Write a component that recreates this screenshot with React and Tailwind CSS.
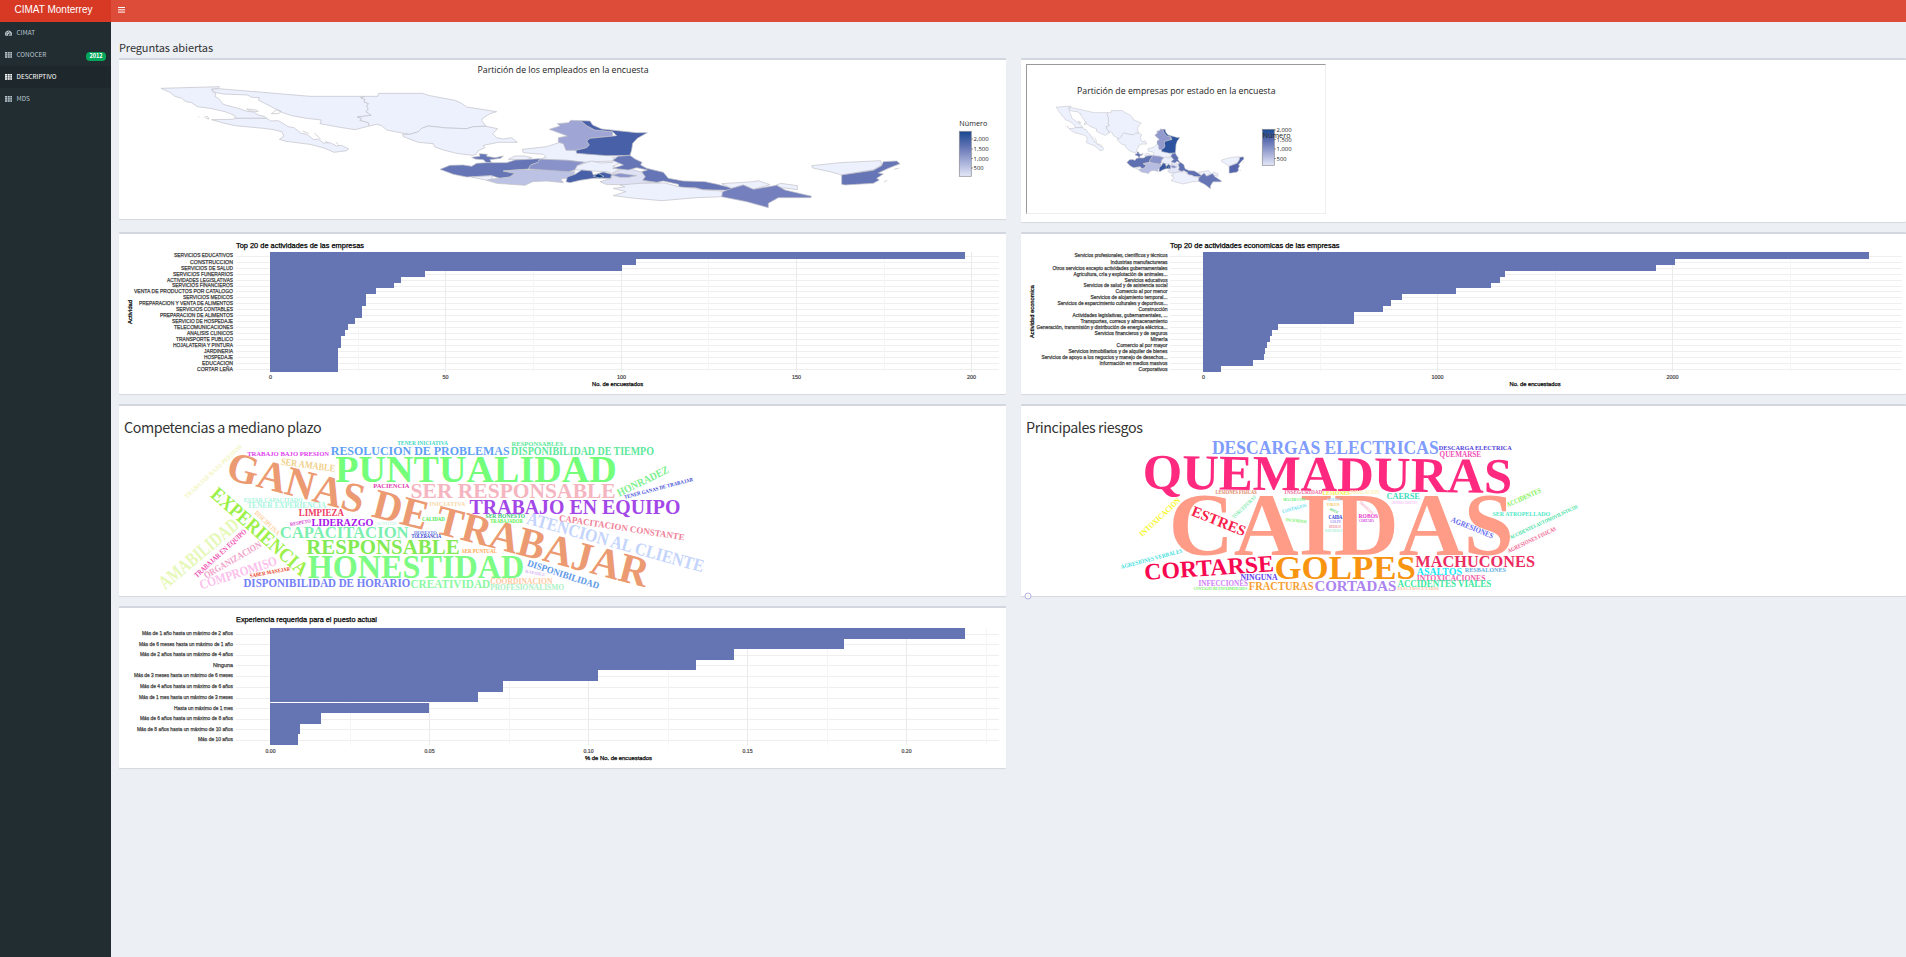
import React from "react";

const CJK = '"Noto Sans CJK SC", "Open Sans", sans-serif';
const SANS = '"Open Sans", "Noto Sans", sans-serif';
const HELV = '"Liberation Sans", Arial, sans-serif';
const SERIF = '"Liberation Serif", serif';

/* ---------- Map of Mexico ---------- */
// [name, outline, fill for employees, fill for companies]
const STATES = [
  ["bc", "M153,100 L328,95 L325,101 L305,103 L308,110 L318,116 L315,124 L326,131 L340,148 L362,154 L385,160 L408,168 L430,171 L446,180 L465,185 L470,190 L375,190 L376,184 L366,178 L345,170 L300,160 L262,155 L245,143 L228,140 L215,130 L195,124 L180,112 Z", "#edf1fe", "#edf1fe"],
  ["bcs", "M375,190 L470,190 L482,198 L505,197 L535,215 L552,218 L572,234 L590,238 L612,254 L625,252 L640,264 L660,263 L680,273 L695,271 L716,282 L710,287 L672,292 L645,280 L600,268 L528,259 L508,253 L522,243 L515,230 L490,224 L460,220 L375,212 L340,204 L305,194 L368,193 Z", "#edf1fe", "#edf1fe"],
  ["son", "M325,101 L460,112 L600,124 L765,124 L752,128 L765,133 L762,141 L776,146 L770,153 L775,162 L768,170 L784,181 L742,186 L755,190 L750,196 L775,203 L778,213 L735,224 L690,217 L630,206 L634,195 L590,190 L545,182 L515,172 L478,152 L445,135 L448,128 L425,127 L412,120 L340,117 L315,112 L305,103 Z", "#edf1fe", "#edf1fe"],
  ["chih", "M765,124 L803,124 L806,115 L937,115 L960,122 L1035,136 L1055,145 L1070,156 L1160,170 L1140,176 L1118,190 L1115,197 L1128,213 L1090,215 L1070,221 L1010,219 L955,213 L935,220 L925,230 L900,238 L870,233 L830,225 L815,212 L800,208 L778,213 L775,203 L750,196 L755,190 L742,186 L784,181 L768,170 L775,162 L770,153 L776,146 L762,141 L765,133 L752,128 Z", "#edf1fe", "#edf1fe"],
  ["dgo", "M955,213 L1010,219 L1070,221 L1090,215 L1128,214 L1163,221 L1148,236 L1160,248 L1180,252 L1205,248 L1222,262 L1165,262 L1120,271 L1125,278 L1105,287 L1098,298 L1088,301 L1040,295 L1000,285 L975,276 L970,266 L925,262 L880,245 L878,238 L900,238 L925,230 L935,220 Z", "#edf1fe", "#edf1fe"],
  ["nay", "M1085,307 L1110,304 L1108,296 L1132,298 L1130,304 L1155,308 L1180,303 L1172,310 L1140,314 L1145,324 L1128,322 L1120,314 L1095,312 Z", "#6575b5", "#5f70b2"],
  ["ags", "M1195,313 L1215,303 L1245,303 L1265,308 L1250,314 Z", "#edf1fe", "#edf1fe"],
  ["jal", "M990,343 L1020,331 L1060,330 L1085,334 L1100,325 L1130,323 L1190,323 L1215,315 L1290,311 L1284,322 L1262,330 L1255,342 L1180,348 L1215,355 L1200,366 L1170,370 L1145,362 L1070,366 L1030,358 Z", "#6575b5", "#5f70b2"],
  ["col", "M1085,366 L1145,362 L1147,372 L1130,376 Z", "#edf1fe", "#edf1fe"],
  ["mich", "M1130,376 L1147,372 L1170,370 L1200,366 L1215,355 L1180,348 L1225,344 L1300,345 L1395,350 L1392,358 L1370,370 L1352,372 L1360,383 L1310,378 L1268,380 L1245,391 L1160,385 Z", "#bcc2e4", "#b7bde2"],
  ["slp", "M1237,283 L1310,275 L1350,262 L1362,266 L1370,285 L1398,285 L1400,294 L1440,298 L1560,302 L1508,308 L1515,318 L1460,320 L1420,322 L1375,316 L1290,313 L1308,306 L1300,298 L1240,293 Z", "#edf1fe", "#edf1fe"],
  ["gto", "M1262,330 L1284,322 L1290,312 L1330,314 L1375,316 L1425,322 L1402,332 L1395,345 L1375,350 L1300,345 L1255,342 Z", "#8993c9", "#8993c9"],
  ["nl", "M1318,223 L1350,213 L1342,206 L1375,203 L1383,196 L1412,197 L1430,212 L1455,225 L1508,230 L1508,243 L1440,250 L1430,258 L1438,270 L1430,278 L1398,286 L1368,286 L1360,266 L1345,262 L1345,248 L1372,243 Z", "#9fa6d5", "#9299cc"],
  ["tam", "M1412,197 L1440,198 L1448,210 L1475,222 L1580,233 L1612,233 L1582,250 L1568,265 L1565,285 L1560,301 L1490,302 L1400,295 L1398,286 L1430,278 L1438,270 L1430,258 L1440,250 L1520,242 L1508,230 L1455,225 L1430,212 Z", "#4860a8", "#2d529d"],
  ["qro", "M1395,345 L1402,332 L1445,318 L1470,324 L1508,322 L1510,314 L1530,325 L1508,334 L1530,342 L1505,355 L1490,350 L1445,348 L1420,345 Z", "#edf1fe", "#edf1fe"],
  ["pue", "M1505,358 L1530,345 L1555,336 L1570,345 L1600,352 L1605,366 L1598,376 L1650,382 L1590,385 L1560,390 L1488,388 L1470,380 L1505,370 Z", "#dfe2f5", "#e3e6f8"],
  ["tlx", "M1505,360 L1530,355 L1580,362 L1555,367 L1530,367 Z", "#8993c9", "#8993c9"],
  ["mex", "M1368,380 L1372,366 L1395,358 L1415,345 L1445,348 L1450,360 L1480,351 L1505,358 L1502,370 L1450,370 L1410,376 L1380,383 Z", "#4860a8", "#3a589f"],
  ["df", "M1450,364 L1465,356 L1482,364 L1470,369 Z", "#123f85", "#123f85"],
  ["ver", "M1525,304 L1560,301 L1575,312 L1596,322 L1592,330 L1610,340 L1660,352 L1675,370 L1720,378 L1785,380 L1822,388 L1868,400 L1860,406 L1780,404 L1755,398 L1708,400 L1705,388 L1660,378 L1640,382 L1598,376 L1606,365 L1595,350 L1612,345 L1580,338 L1555,345 L1508,340 L1540,330 L1508,316 Z", "#6575b5", "#5f70b2"],
  ["oax", "M1510,400 L1545,396 L1530,390 L1590,385 L1665,384 L1705,395 L1755,400 L1780,405 L1835,408 L1838,425 L1760,428 L1655,437 L1575,430 L1510,422 L1548,410 Z", "#edf1fe", "#edf1fe"],
  ["tab", "M1835,386 L1930,380 L1945,377 L1980,389 L1930,403 L1900,390 L1865,400 Z M2012,385 L2062,392 L2062,404 L2015,398 L1995,392 Z", "#edf1fe", "#edf1fe"],
  ["chis", "M1835,425 L1838,410 L1865,400 L1900,390 L1930,403 L2000,391 L2025,405 L2105,424 L2102,428 L2005,428 L1975,445 L1975,458 L1910,440 Z", "#7480bd", "#6575b5"],
  ["yuc", "M2105,332 L2190,323 L2312,317 L2315,330 L2290,344 L2195,360 L2160,350 L2108,339 Z", "#edf1fe", "#edf1fe"],
  ["qr", "M2195,360 L2290,346 L2315,332 L2320,320 L2360,318 L2370,326 L2335,340 L2305,354 L2320,357 L2300,370 L2308,375 L2290,385 L2205,390 L2195,388 Z", "#6575b5", "#5566ac"],
  ["isl", "M265,184 L268,187 M283,187 L292,184 L297,192 L288,190 M410,162 L440,165 L445,170 L420,168 Z M484,176 L500,164 L514,169 L505,176 Z M578,228 L596,235 M613,234 L632,252 M646,258 L655,264 M678,262 L686,270 M2352,343 L2368,339 M2322,381 L2332,376", "none", "none"],
];

function MexicoMap({ transform, companies }) {
  return (
    <g transform={transform} stroke="#c2c2c8" strokeWidth={companies ? "0.55" : "0.7"} strokeLinejoin="round">
      {STATES.map(([id, d, a, b]) => (
        <path key={id} d={d} fill={companies ? b : a} vectorEffect="non-scaling-stroke" />
      ))}
    </g>
  );
}

// Text with a fixed start, baseline and drawn length
function T({ x, y, s, w, c = "#222", r, children, ...rest }) {
  return (
    <text x={x} y={y} fontSize={s} fill={c} textLength={w} lengthAdjust="spacingAndGlyphs" transform={r ? `rotate(${r} ${x} ${y})` : undefined} {...rest}>
      {children}
    </text>
  );
}

function Legend({ id, x, y, h, nx, ny, ticks }) {
  return (
    <g fontFamily={SANS}>
      <defs>
        <linearGradient id={id} x1="0" y1="0" x2="0" y2="1">
          <stop offset="0" stopColor="#17478f" />
          <stop offset="0.35" stopColor="#6575b5" />
          <stop offset="1" stopColor="#e4e7f8" />
        </linearGradient>
      </defs>
      <rect x={x} y={y} width="12" height={h} fill={`url(#${id})`} stroke="#8a8a94" strokeWidth="0.7" />
      <T x={nx} y={ny} s={7.4} w={28}>Número</T>
      {ticks.map(([label, ty]) => (
        <g key={label}>
          <path d={`M${x + 12},${ty} h1.5`} stroke="#555" strokeWidth="0.7" />
          <T x={x + 14.3} y={ty + 2} s={5.8} w={label.length > 3 ? 15 : 10}>{label}</T>
        </g>
      ))}
    </g>
  );
}

/* ---------- Horizontal bar charts ---------- */
function BarChart({ view, h, title, titleX, titleW, titleY, yTitle, xTitle, x0, left, right, edges, rows, major, minor, labelRight, tickDrop = 7.3 }) {
  const bottom = edges[edges.length - 1];
  return (
    <svg viewBox={view} className="block w-full" style={{ height: h }} fontFamily={HELV}>
      {rows.map((r, i) => {
        const y = Math.round((edges[i] + edges[i + 1]) / 2) + 0.5;
        return <path key={i} d={`M${left},${y} H${right}`} stroke="#efefef" strokeWidth="1" />;
      })}
      {minor.map((x) => <path key={x} d={`M${x},${edges[0]} V${bottom}`} stroke="#f5f5f5" strokeWidth="1" />)}
      {major.map(([x]) => <path key={x} d={`M${x},${edges[0]} V${bottom}`} stroke="#ebebeb" strokeWidth="1" />)}
      {rows.map(([label, end, w, gap], i) => (
        <g key={label}>
          <rect x={x0} y={edges[i]} width={end - x0} height={edges[i + 1] - edges[i] - (gap || 0)} fill="#6575b3" shapeRendering="crispEdges" />
          <T x={labelRight - w} y={(edges[i] + edges[i + 1]) / 2 + 1.9} s={5.7} w={w} c="#3d3d3d" stroke="#3d3d3d" strokeWidth="0.25">{label}</T>
        </g>
      ))}
      {major.map(([x, label, w]) => (
        <T key={label} x={x - w / 2} y={bottom + tickDrop} s={5.4} w={w} c="#444" stroke="#444" strokeWidth="0.2">{label}</T>
      ))}
      <T x={titleX} y={titleY} s={7.2} w={titleW} c="#000" stroke="#000" strokeWidth="0.25">{title}</T>
      {yTitle && <T x={yTitle[1]} y={yTitle[2]} s={6.2} w={yTitle[3]} r={-90} c="#000" stroke="#000" strokeWidth="0.25">{yTitle[0]}</T>}
      <T x={xTitle[1]} y={xTitle[2]} s={6.2} w={xTitle[3]} c="#000" stroke="#000" strokeWidth="0.25">{xTitle[0]}</T>
    </svg>
  );
}

const EDGES20 = [252, 259, 265, 271, 277, 283, 288, 294, 300, 306, 312, 318, 324, 330, 336, 342, 348, 354, 360, 366, 372];

const ACTIVITIES = [
  ["SERVICIOS EDUCATIVOS", 965, 59], ["CONSTRUCCION", 636, 43], ["SERVICIOS DE SALUD", 622, 52],
  ["SERVICIOS FUNERARIOS", 425, 60], ["ACTIVIDADES LEGISLATIVAS", 401, 66], ["SERVICIOS FINANCIEROS", 394, 61],
  ["VENTA DE PRODUCTOS POR CATALOGO", 376, 99], ["SERVICIOS MEDICOS", 366, 50], ["PREPARACION Y VENTA DE ALIMENTOS", 366, 94],
  ["SERVICIOS CONTABLES", 362, 57], ["PREPARACION DE ALIMENTOS", 362, 73], ["SERVICIO DE HOSPEDAJE", 355, 61],
  ["TELECOMUNICACIONES", 348, 59], ["ANALISIS CLINICOS", 345, 46], ["TRANSPORTE PUBLICO", 341, 57],
  ["HOJALATERIA Y PINTURA", 341, 60], ["JARDINERIA", 338, 29], ["HOSPEDAJE", 338, 29], ["EDUCACION", 338, 31], ["CORTAR LEÑA", 338, 36],
];

const ECONOMIC = [
  ["Servicios profesionales, científicos y técnicos", 1869, 93], ["Industrias manufactureras", 1675, 57],
  ["Otros servicios excepto actividades gubernamentales", 1656, 115], ["Agricultura, cría y explotación de animales...", 1505, 94],
  ["Servicios educativos", 1500, 43], ["Servicios de salud y de asistencia social", 1491, 84], ["Comercio al por menor", 1456, 52],
  ["Servicios de alojamiento temporal...", 1402, 77], ["Servicios de esparcimiento culturales y deportivos...", 1391, 110],
  ["Construcción", 1383, 29], ["Actividades legislativas, gubernamentales, ...", 1354, 95], ["Transportes, correos y almacenamiento", 1354, 87],
  ["Generación, transmisión y distribución de energía eléctrica...", 1278, 131], ["Servicios financieros y de seguros", 1272, 73],
  ["Minería", 1270, 17], ["Comercio al por mayor", 1267, 51], ["Servicios inmobiliarios y de alquiler de bienes", 1265, 99],
  ["Servicios de apoyo a los negocios y manejo de desechos...", 1264, 126], ["Información en medios masivos", 1253, 68], ["Corporativos", 1221, 29],
];

const EXPERIENCE = [
  ["Más de 1 año hasta un máximo de 2 años", 965, 91], ["Más de 6 meses hasta un máximo de 1 año", 844, 94],
  ["Más de 2 años hasta un máximo de 4 años", 734, 93], ["Ninguna", 696, 20], ["Más de 3 meses hasta un máximo de 6 meses", 598, 99],
  ["Más de 4 años hasta un máximo de 6 años", 503, 93], ["Más de 1 mes hasta un máximo de 3 meses", 478, 94, 1],
  ["Hasta un máximo de 1 mes", 429, 59], ["Más de 6 años hasta un máximo de 8 años", 321, 93],
  ["Más de 8 años hasta un máximo de 10 años", 300, 96], ["Más de 10 años", 298, 35],
];

/* ---------- Word clouds: [word, x, baseline, length, size, colour, angle] ---------- */
const SKILLS = [
  ["TENER INICIATIVA", 397.3, 444.8, 50.4, 5.5, "#3fd8c4"],
  ["RESOLUCION DE PROBLEMAS", 331, 454.5, 178.3, 12.5, "#5fa0f5"],
  ["RESPONSABLES", 511.7, 445.6, 51.6, 6, "#5ee89a"],
  ["DISPONIBILIDAD DE TIEMPO", 511.3, 454.7, 142.4, 11.5, "#5ee89a"],
  ["TRABAJO BAJO PRESION", 247.3, 455.5, 81.7, 6.7, "#e040f0"],
  ["SER AMABLE", 280.7, 464.7, 54.6, 10, "#f0d08a", 7.5],
  ["PUNTUALIDAD", 336, 481.5, 280, 38, "#74ff7a"],
  ["PACIENCIA", 373.3, 487.7, 36, 6.8, "#e040b0"],
  ["SER RESPONSABLE", 411, 497.7, 204.3, 22, "#f5b5c0"],
  ["HONRADEZ", 619.3, 496.7, 56, 11, "#7cf08c", -26],
  ["TENER GANAS DE TRABAJAR", 624.7, 499, 71, 5.5, "#3f50d8", -14.7],
  ["TRABAJO EN EQUIPO", 470, 513.7, 210, 20.5, "#a347e8"],
  ["GANAS DE TRABAJAR", 224.7, 478.5, 434, 42, "#ec9a72", 14.5],
  ["TRABAJAR BAJO PRESION", 187, 499, 76, 6.5, "#f3f5c0", -43],
  ["EXPERIENCIA", 209.5, 496, 122, 20, "#9cf04a", 41.5],
  ["ESTAR CAPACITADO", 244, 502, 58.3, 6.3, "#a8f5dc"],
  ["TENER EXPERIENCIA", 247.3, 508, 78.7, 8, "#a8f5e0"],
  ["LIMPIEZA", 299, 516, 44.7, 9.5, "#f03c64"],
  ["RESPETO", 290.3, 526, 21, 5, "#d040d0", -10],
  ["LIDERAZGO", 311.7, 525.7, 61.6, 11, "#a810e8"],
  ["ACTITUD", 376, 525, 20, 5, "#c8f5e8"],
  ["INICIATIVA", 429.3, 505.7, 36, 7, "#f8d8a8"],
  ["CALIDAD", 422, 520.7, 22.7, 5.5, "#4ce850"],
  ["DISCIPLINA", 254, 513.5, 32.3, 7, "#ffd0a0", 43.7],
  ["CAPACITACION", 280, 538, 128.3, 17.5, "#7cefb0"],
  ["HONESTO", 414, 534, 22.7, 5, "#6a80e0"],
  ["TOLERANCIA", 411.7, 538, 29.3, 5.5, "#3040d0"],
  ["SER HONESTO", 485.7, 518.3, 39.3, 6, "#3cc878"],
  ["TRABAJADOR", 490.3, 522.7, 32.4, 5.5, "#60f050"],
  ["ATENCION AL CLIENTE", 525.8, 523.5, 183, 18, "#c4d4fc", 15.5],
  ["CAPACITACION CONSTANTE", 558.7, 520.7, 127, 9, "#f08098", 8.9],
  ["AMABILIDAD", 165.3, 590, 98, 19.5, "#e6f8b8", -40],
  ["TRABAJAR EN EQUIPO", 197, 578, 67.7, 7.5, "#f050b0", -42.4],
  ["ORGANIZACION", 206.2, 578.8, 64.7, 9.5, "#f0a0c8", -30],
  ["COMPROMISO", 201.2, 589.6, 80.6, 13.5, "#fcc0ec", -18],
  ["SABER MANEJAR", 250.3, 577.7, 40.7, 5.5, "#e84028", -10.5],
  ["RESPONSABLE", 306.7, 553.7, 152.6, 21.5, "#84ea54"],
  ["SER PUNTUAL", 462, 553, 34.7, 5.8, "#ffa850"],
  ["HONESTIDAD", 308.3, 577.7, 215.4, 33, "#7cfc84"],
  ["DISPONIBILIDAD", 526.7, 565.8, 75, 9.5, "#5c98e8", 18],
  ["RAPIDEZ", 525, 572.8, 20, 4.5, "#d8b8f8", 10],
  ["COORDINACION", 490.3, 584, 62, 8.3, "#ffc8a0"],
  ["PROFESIONALISMO", 490.3, 590, 73.7, 7.8, "#acf0c4"],
  ["DISPONIBILIDAD DE HORARIO", 243.7, 586.7, 166.3, 11.8, "#7480f8"],
  ["CREATIVIDAD", 410.7, 587.7, 79.3, 12, "#8cf8a4"],
];

const RISKS = [
  ["DESCARGAS ELECTRICAS", 1212.3, 453.8, 226, 18.3, "#809cfc"],
  ["DESCARGA ELECTRICA", 1439, 449.9, 72.7, 6.5, "#5040d8"],
  ["QUEMARSE", 1439.7, 456.9, 41.3, 8, "#f050b8"],
  ["QUEMADURAS", 1142.5, 488.5, 369.5, 50, "#ff2a80", 0.7],
  ["LESIONES FISICAS", 1215.7, 494, 41, 5.3, "#e08060"],
  ["INSEGURIDAD", 1284.7, 494.3, 37.6, 6, "#f070a0"],
  ["LESIONES", 1322.7, 494.7, 27.3, 6.5, "#f0f040"],
  ["INHALACION", 1350, 494, 29.3, 5.5, "#fff0b0"],
  ["CAERSE", 1386.7, 499.3, 33, 8.5, "#3cdcc0"],
  ["ADORMECIMIENTO", 1391.3, 504.3, 26, 4, "#f8c8f8"],
  ["CAIDAS", 1170.5, 553.7, 341.5, 88, "#ff9c88"],
  ["ESTRES", 1190.5, 515, 57, 15, "#f82048", 22],
  ["INTOXICACION", 1142.5, 537, 52.6, 8, "#f8f820", -43],
  ["TORCEDURAS", 1234, 519, 31, 5.5, "#80ecb0", -43.7],
  ["MACHUCON", 1283.3, 501.3, 21.7, 4.5, "#60f070"],
  ["CONTAGIOS", 1282.7, 513.3, 25, 5, "#60e0f0", -15.5],
  ["INCENDIOS", 1285.7, 521, 21, 4.5, "#70f060", 6],
  ["ALERGIAS", 1327, 501, 13.5, 3.8, "#90d8f8"],
  ["VIRUS", 1326.5, 506.3, 13, 4, "#f8c860"],
  ["ROCE", 1329.5, 510, 9, 3.8, "#40d060", 25],
  ["CAIDA", 1328.7, 519.3, 13.6, 5.5, "#2030d0"],
  ["GOLPE", 1330, 523.3, 11, 3.8, "#a090f0"],
  ["HERIDAS", 1329, 527.8, 12, 3.8, "#f090a0"],
  ["RASPADURAS", 1325, 532, 17, 3.8, "#a0f0d0"],
  ["TROPIEZOS", 1359.3, 503, 17, 4, "#f8a0c0", 42],
  ["ROBOS", 1358.7, 518.3, 19.3, 6, "#e838c8"],
  ["CORTADA", 1359, 522, 15, 3.4, "#d040e0"],
  ["AGRESIONES", 1450.5, 521.5, 45, 8, "#6468f0", 22.6],
  ["ACCIDENTES", 1507.8, 507.2, 37, 7, "#80f050", -24],
  ["SER ATROPELLADO", 1492.7, 515.7, 57.3, 6.5, "#50e8c8"],
  ["ACCIDENTES AUTOMOVILISTICOS", 1510.7, 539.3, 74.4, 5.3, "#40e0a0", -25],
  ["AGRESIONES FISICAS", 1508.8, 553, 53, 6, "#f06090", -25.6],
  ["AGRESIONES VERBALES", 1121.3, 569, 63.5, 6, "#40e0e0", -15],
  ["CORTARSE", 1144.7, 580, 130, 23.5, "#f80850", -3.9],
  ["GOLPES", 1275.2, 579.3, 140, 34.5, "#f89410"],
  ["MACHUCONES", 1415.7, 567, 119, 16.7, "#ec2c60"],
  ["NINGUNA", 1240.7, 580.3, 36.6, 9, "#6440f0"],
  ["INFECCIONES", 1198.7, 586, 49, 8, "#d080f8"],
  ["CONTAGIO DE ENFERMEDADES", 1193.7, 590.3, 53.3, 4, "#70f060"],
  ["FRACTURAS", 1249, 589.7, 64.3, 12, "#f8a030"],
  ["CORTADAS", 1314.7, 590.7, 81.3, 14.5, "#ac84f0"],
  ["ASALTOS", 1417, 574.7, 44.7, 11, "#20e8f8"],
  ["RESBALONES", 1465, 571.7, 40.7, 7, "#60b0e0"],
  ["INTOXICACIONES", 1417, 580.7, 68.3, 9, "#f060a8"],
  ["ACCIDENTES VIALES", 1397.7, 586.7, 93.3, 10, "#40e8a0"],
  ["ELECTROCUTARSE", 1397.7, 590, 41.3, 5, "#ffc0a0"],
];

// Horizontal words are widened a little so that their ink, without side bearings, fills the given length
function WordCloud({ view, words }) {
  return (
    <svg viewBox={view} className="block h-[158px] w-full" fontFamily={SERIF} fontWeight="700">
      {words.map(([t, x, y, w, s, c, r]) => (
        <T key={t} x={r ? x : x - s * 0.02} y={y} w={r ? w : w + s * 0.04} s={s} c={c} r={r}>{t}</T>
      ))}
    </svg>
  );
}

function Card({ className, children }) {
  return (
    <section className={`overflow-hidden rounded-[1px] border-t-2 border-[#d2d6de] bg-white shadow-[0_1px_1px_rgba(0,0,0,0.1)] ${className}`}>
      {children}
    </section>
  );
}

/* ---------- Sidebar ---------- */
function GaugeIcon() {
  return (
    <svg viewBox="0 0 14 12" className="h-[6px] w-[7px]" fill="currentColor">
      <path d="M7 1a7 7 0 0 0-6 10.5h12A7 7 0 0 0 7 1z" />
      <g fill="#222d32"><circle cx="3" cy="8" r="1" /><circle cx="4.2" cy="4.8" r="1" /><circle cx="7" cy="3.4" r="1" /><circle cx="11" cy="8" r="1" /><path d="M9.4 4.4l.9.4-1.8 3.8a1.6 1.6 0 1 1-1-.4z" /></g>
    </svg>
  );
}

function GridIcon() {
  return (
    <svg viewBox="0 0 7.4 6" className="h-[6px] w-[7.4px]" fill="currentColor">
      {[0, 2.65, 5.3].map((x) => [0, 2.1, 4.2].map((y) => <rect key={`${x}-${y}`} x={x} y={y} width="2.1" height="1.6" />))}
    </svg>
  );
}

const MENU = [
  { label: "CIMAT", icon: <GaugeIcon /> },
  { label: "CONOCER", icon: <GridIcon />, badge: "2012" },
  { label: "DESCRIPTIVO", icon: <GridIcon />, active: true },
  { label: "MDS", icon: <GridIcon /> },
];

export default function App() {
  return (
    <div className="flex h-[957px] w-full flex-col overflow-hidden bg-[#ecf0f5]">
      <header className="flex h-[22px] shrink-0 bg-[#dd4b39] text-white">
        <div className="flex w-[111px] justify-center bg-[#d73925] pr-[4px] text-[10px] leading-[19px]" style={{ fontFamily: HELV }}>
          CIMAT Monterrey
        </div>
        <svg viewBox="0 0 7 6" className="mt-[7px] ml-[7px] h-[6px] w-[7px]" fill="#fff">
          <rect x="0" y="0" width="7" height="1" />
          <rect x="0" y="2.3" width="7" height="1" />
          <rect x="0" y="4.6" width="7" height="1" />
        </svg>
      </header>

      <div className="flex min-h-0 flex-1">
        <nav className="w-[111px] shrink-0 bg-[#222d32] text-[6.4px]" style={{ fontFamily: CJK }}>
          {MENU.map((m) => (
            <div key={m.label} className={`flex h-[22px] items-center pr-[5px] pl-[5px] ${m.active ? "bg-[#1e282c] text-white" : "text-[#b8c7ce]"}`}>
              <span className="w-[11.5px]">{m.icon}</span>
              <span>{m.label}</span>
              {m.badge && (
                <span className="mt-[3px] ml-auto flex h-[9px] w-[20px] items-center justify-center rounded-[4px] bg-[#00a65a] text-[5.6px] font-bold text-white">{m.badge}</span>
              )}
            </div>
          ))}
        </nav>

        <main className="min-w-0 flex-1 pl-[8px]">
          <h1 className="h-[36px] pt-[15px] text-[11px] leading-[20px] tracking-[-0.01em] text-[#333]" style={{ fontFamily: CJK }}>Preguntas abiertas</h1>

          <div className="flex gap-[15px]">
            <div className="flex w-[887px] shrink-0 flex-col gap-[10px]">
              <Card className="mb-[3px] h-[161px]">
                <svg viewBox="119 60 887 159" className="block h-[159px] w-full">
                  <T x={477.5} y={72.7} s={8.6} w={171} fontFamily={SANS}>Partición de los empleados en la encuesta</T>
                  <MexicoMap transform="translate(110 55) scale(0.33333)" />
                  <Legend id="lg1" x={959.3} y={131.3} h={45} nx={959.3} ny={126} ticks={[["2,000", 139], ["1,500", 149], ["1,000", 158.5], ["500", 168]]} />
                </svg>
              </Card>
              <Card className="h-[162px]">
                <BarChart
                  view="119 234 887 160" h={160} title="Top 20 de actividades de las empresas" titleX={236} titleW={128} titleY={247.6}
                  yTitle={["Actividad", 132, 324, 24]} xTitle={["No. de encuestados", 592, 385.6, 51]}
                  x0={270} left={236} right={999} labelRight={233} edges={EDGES20} rows={ACTIVITIES}
                  major={[[270.5, "0", 3], [445.5, "50", 6], [621.5, "100", 9], [796.5, "150", 9], [971.5, "200", 9]]}
                  minor={[358.5, 533.5, 708.5, 884.5]}
                />
              </Card>
              <Card className="h-[192px]">
                <h3 className="h-[32px] pt-[11px] pl-[5px] text-[14.3px] leading-[20px] tracking-[-0.029em] text-[#333]" style={{ fontFamily: CJK }}>Competencias a mediano plazo</h3>
                <WordCloud view="119 438 887 158" words={SKILLS} />
              </Card>
              <Card className="h-[162px]">
                <BarChart
                  view="119 608 887 160" h={160} title="Experiencia requerida para el puesto actual" titleX={236} titleW={141} titleY={621.6}
                  xTitle={["% de No. de encuestados", 585, 759.6, 67]} tickDrop={8}
                  x0={270} left={236} right={999} labelRight={233}
                  edges={[628, 639, 649, 660, 670, 681, 692, 703, 713, 724, 734, 745]} rows={EXPERIENCE}
                  major={[[270.5, "0.00", 10], [429.5, "0.05", 10], [588.5, "0.10", 10], [747.5, "0.15", 10], [906.5, "0.20", 10]]}
                  minor={[350.5, 509.5, 668.5, 827.5, 986.5]}
                />
              </Card>
            </div>

            <div className="relative flex w-[885px] shrink-0 flex-col gap-[10px]">
              <Card className="h-[164px]">
                <div className="mt-[4px] ml-[5px] h-[150px] w-[300px] border border-t-[#9a9a9a] border-r-[#eee] border-b-[#eee] border-l-[#9a9a9a]">
                  <svg viewBox="1027 65 298 148" className="block h-[148px] w-[298px]">
                    <T x={1077} y={93.7} s={8.9} w={198.5} fontFamily={SANS}>Partición de empresas por estado en la encuesta</T>
                    <MexicoMap companies transform="translate(1043 84.4) scale(0.0848 0.2277)" />
                    <Legend id="lg2" x={1262.3} y={129.3} h={36} nx={1262.5} ny={137.5} ticks={[["2,000", 130], ["1,500", 139.5], ["1,000", 149], ["500", 158.5]]} />
                  </svg>
                </div>
              </Card>
              <Card className="h-[162px]">
                <BarChart
                  view="1021 234 885 160" h={160} title="Top 20 de actividades economicas de las empresas" titleX={1170} titleW={169.5} titleY={247.6}
                  yTitle={["Actividad economica", 1034, 338, 53]} xTitle={["No. de encuestados", 1509.5, 385.6, 51]}
                  x0={1203} left={1170} right={1902} labelRight={1167.5} edges={EDGES20} rows={ECONOMIC}
                  major={[[1203.5, "0", 3], [1437.5, "1000", 12], [1672.5, "2000", 12]]}
                  minor={[1320.5, 1555.5, 1790.5]}
                />
              </Card>
              <Card className="h-[192px]">
                <h3 className="h-[32px] pt-[11px] pl-[5px] text-[14.3px] leading-[20px] tracking-[-0.029em] text-[#333]" style={{ fontFamily: CJK }}>Principales riesgos</h3>
                <WordCloud view="1021 438 885 158" words={RISKS} />
              </Card>
              <svg viewBox="0 0 8 8" className="absolute top-[534px] left-[3px] h-[8px] w-[8px]">
                <circle cx="4" cy="4" r="3" fill="#fff" stroke="#a9a9d8" strokeWidth="0.9" />
                <path d="M3,4 h2" stroke="#c9c9dd" strokeWidth="0.6" />
              </svg>
            </div>
          </div>
        </main>
      </div>
    </div>
  );
}
